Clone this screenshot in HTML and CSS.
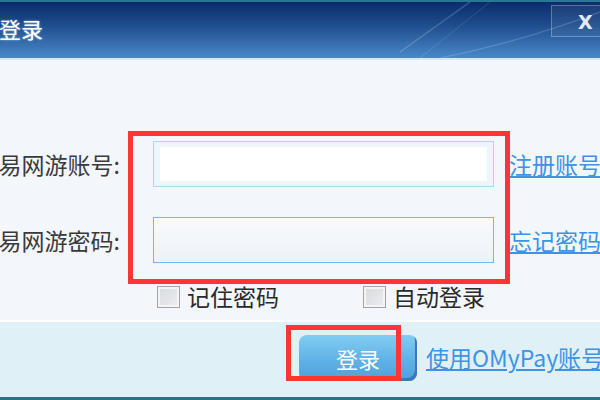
FILE: index.html
```html
<!DOCTYPE html>
<html lang="zh">
<head>
<meta charset="utf-8">
<link rel="stylesheet" href="styles.css">
</head>
<body>
<div class="dialog">
  <div class="titlebar">
    <span class="title">登录</span>
    <svg class="streaks" width="600" height="56" viewBox="0 0 600 56">
      <path d="M400 50 L470 0" stroke="rgba(255,255,255,0.18)" stroke-width="1.5" fill="none"/>
      <path d="M420 56 L490 0" stroke="rgba(255,255,255,0.12)" stroke-width="1" fill="none"/>
      <path d="M440 56 Q520 40 600 10" stroke="rgba(255,255,255,0.18)" stroke-width="1.2" fill="none"/>
    </svg>
    <div class="closebox"><span class="close">X</span></div>
  </div>
  <div class="sep"></div>
  <div class="content">
    <div class="form">
      <label class="label">易网游账号:</label>
      <div class="input input-active"><div class="input-inner"></div></div>
      <a class="link" href="#">注册账号</a>

      <label class="label">易网游密码:</label>
      <div class="input input-plain"></div>
      <a class="link" href="#">忘记密码</a>
    </div>
    <div class="checks">
      <span class="check"><span class="box"></span>记住密码</span>
      <span class="check"><span class="box"></span>自动登录</span>
    </div>
    <div class="mark mark-form"></div>
  </div>
  <div class="footer">
    <button class="btn">登录</button>
    <a class="link footer-link" href="#">使用OMyPay账号</a>
    <div class="mark mark-btn"></div>
  </div>
  <div class="bottombar"></div>
</div>
</body>
</html>
```

FILE: styles.css
```css
html, body {
  margin: 0;
  padding: 0;
}
body {
  width: 600px;
  height: 400px;
  overflow: hidden;
  font-family: "Noto Sans CJK SC", "Noto Sans", sans-serif;
  background: #f3f6fa;
}
.dialog {
  width: 600px;
  height: 400px;
  display: flex;
  flex-direction: column;
  position: relative;
}
.titlebar {
  position: relative;
  height: 56px;
  border-top: 2px solid #2b7692;
  background: linear-gradient(to bottom, #0b2c6a 0%, #1d4c8c 40%, #4a88c8 100%);
  display: flex;
  align-items: center;
  overflow: hidden;
}
.title {
  color: #ffffff;
  font-size: 22px;
  line-height: 1;
  margin-left: -1px;
  margin-top: -4px;
  text-shadow: 0 0 2px rgba(200,230,255,0.8);
  position: relative;
  z-index: 1;
}
.streaks {
  position: absolute;
  left: 0;
  top: 0;
}
.closebox {
  position: absolute;
  left: 551px;
  top: 3px;
  width: 60px;
  height: 32px;
  border: 1px solid rgba(255,255,255,0.28);
  background: rgba(255,255,255,0.06);
  box-sizing: border-box;
}
.close {
  position: absolute;
  left: 26px;
  top: 7px;
  color: #e4eaf2;
  font-family: "DejaVu Sans", sans-serif;
  font-weight: bold;
  font-size: 19px;
  line-height: 1;
}
.sep {
  height: 2px;
  background: #dbe8f4;
}
.content {
  position: relative;
  height: 260px;
  background: #f3f6fa;
  padding-top: 81px;
  box-sizing: border-box;
}
.form {
  display: grid;
  grid-template-columns: 153px 341px 1fr;
  grid-template-rows: 46px 46px;
  row-gap: 30px;
  align-items: center;
}
.label {
  justify-self: end;
  padding-right: 33px;
  font-size: 23px;
  color: #3a3a3a;
  white-space: nowrap;
  line-height: 1;
}
.input {
  height: 46px;
  box-sizing: border-box;
}
.input-active {
  border: 1px solid #a9d6f0;
  background: #eef5fa;
  padding: 5px 6px;
}
.input-inner {
  height: 100%;
  background: #ffffff;
}
.input-plain {
  border: 1px solid #6cbde8;
  background: linear-gradient(to bottom, #f8fafc, #edf2f7);
}
.link {
  margin-left: 15px;
  font-size: 23px;
  color: #3d93e6;
  text-decoration: underline;
  white-space: nowrap;
  line-height: 1;
}
.checks {
  display: flex;
  margin-top: 22px;
  padding-left: 157px;
}
.check {
  display: flex;
  align-items: center;
  font-size: 23px;
  color: #2a2a2a;
  line-height: 23px;
  width: 206px;
}
.box {
  width: 23px;
  height: 22px;
  border: 1px solid #a3a3a3;
  box-shadow: inset 0 0 0 2px #f4f4f4;
  background: linear-gradient(135deg, #d6dade, #eceef0);
  margin-right: 7px;
  box-sizing: border-box;
}
.mark {
  position: absolute;
  border: 5px solid #ff3434;
  box-sizing: border-box;
}
.mark-form {
  left: 128px;
  top: 71px;
  width: 382px;
  height: 153px;
}
.footer {
  position: relative;
  border-top: 2px solid #ffffff;
  background: #dff0f7;
  display: flex;
  align-items: flex-start;
  padding-left: 299px;
  padding-top: 13px;
  box-sizing: border-box;
  height: 77px;
  overflow: hidden;
}
.btn {
  flex: none;
  width: 118px;
  height: 46px;
  border: none;
  border-radius: 8px;
  background: linear-gradient(to bottom, #82ccf2 0%, #5fb2e6 55%, #4f9fd8 100%);
  box-shadow: inset -2px -3px 0 #3a78b8;
  color: #ffffff;
  font-family: "Noto Sans CJK SC", sans-serif;
  font-size: 22px;
  line-height: 46px;
  padding: 0;
}
.footer-link {
  margin-left: 9px;
  margin-top: 11px;
}
.mark-btn {
  left: 286px;
  top: 3px;
  width: 115px;
  height: 56px;
}
.bottombar {
  height: 3px;
  background: #2e6e88;
}
```
